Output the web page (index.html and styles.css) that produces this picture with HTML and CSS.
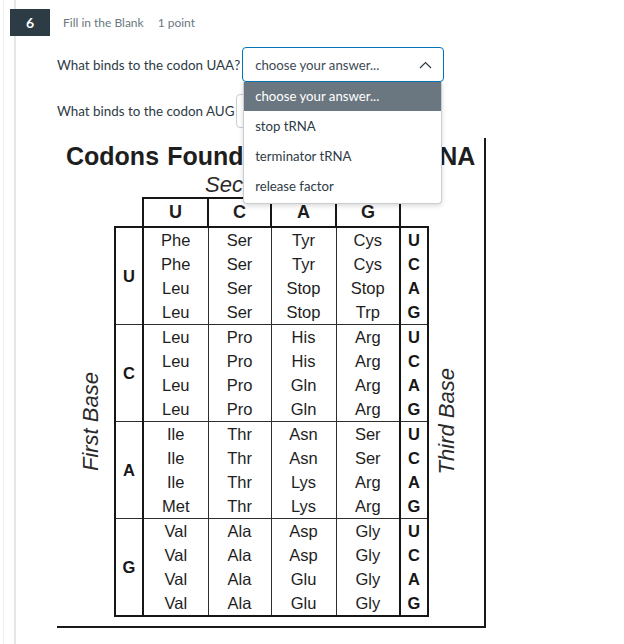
FILE: index.html
```html
<!DOCTYPE html>
<html lang="en">
<head>
<meta charset="utf-8">
<title>Fill in the Blank</title>
<link rel="stylesheet" href="styles.css">
</head>
<body>
<div class="question">
  <div class="q-header">
    <div class="q-num">6</div>
    <span class="q-type">Fill in the Blank</span>
    <span class="q-points">1 point</span>
  </div>
  <div class="q-body">
    <div class="blank-row row1">
      <span class="prompt">What binds to the codon UAA?</span>
      <div class="select-wrap">
        <div class="select open">
          <span>choose your answer...</span>
          <svg class="chev" width="13" height="8" viewBox="0 0 13 8"><polyline points="1,7 6.5,1.5 12,7" fill="none" stroke="#2d3b45" stroke-width="1.2"/></svg>
        </div>
        <ul class="dropdown">
          <li class="active">choose your answer...</li>
          <li>stop tRNA</li>
          <li>terminator tRNA</li>
          <li>release factor</li>
        </ul>
      </div>
    </div>
    <div class="blank-row row2">
      <span class="prompt">What binds to the codon AUG</span>
      <div class="select-wrap">
        <div class="select small">
          <span>choose your answer...</span>
          <svg class="chev" width="13" height="8" viewBox="0 0 13 8"><polyline points="1,1 6.5,6.5 12,1" fill="none" stroke="#2d3b45" stroke-width="1.2"/></svg>
        </div>
      </div>
    </div>
    <div class="figure">
      <div class="fig-title">Codons Found in Messenger RNA</div>
      <div class="fig-sub">Second Base</div>
      <div class="fig-grid">
        <div class="side-label left"><span>First Base</span></div>
        <table class="codon-table">
          <colgroup>
            <col class="c-base"><col class="c-u"><col class="c-c"><col class="c-a"><col class="c-g"><col class="c-base">
          </colgroup>
          <thead>
            <tr><th class="blank"></th><th>U</th><th>C</th><th>A</th><th>G</th><th class="blank"></th></tr>
          </thead>
          <tbody>
            <tr>
              <td class="fb">U</td>
              <td class="aa"><div>Phe</div><div>Phe</div><div>Leu</div><div>Leu</div></td>
              <td class="aa"><div>Ser</div><div>Ser</div><div>Ser</div><div>Ser</div></td>
              <td class="aa"><div>Tyr</div><div>Tyr</div><div>Stop</div><div>Stop</div></td>
              <td class="aa"><div>Cys</div><div>Cys</div><div>Stop</div><div>Trp</div></td>
              <td class="tb"><div>U</div><div>C</div><div>A</div><div>G</div></td>
            </tr>
            <tr>
              <td class="fb">C</td>
              <td class="aa"><div>Leu</div><div>Leu</div><div>Leu</div><div>Leu</div></td>
              <td class="aa"><div>Pro</div><div>Pro</div><div>Pro</div><div>Pro</div></td>
              <td class="aa"><div>His</div><div>His</div><div>Gln</div><div>Gln</div></td>
              <td class="aa"><div>Arg</div><div>Arg</div><div>Arg</div><div>Arg</div></td>
              <td class="tb"><div>U</div><div>C</div><div>A</div><div>G</div></td>
            </tr>
            <tr>
              <td class="fb">A</td>
              <td class="aa"><div>Ile</div><div>Ile</div><div>Ile</div><div>Met</div></td>
              <td class="aa"><div>Thr</div><div>Thr</div><div>Thr</div><div>Thr</div></td>
              <td class="aa"><div>Asn</div><div>Asn</div><div>Lys</div><div>Lys</div></td>
              <td class="aa"><div>Ser</div><div>Ser</div><div>Arg</div><div>Arg</div></td>
              <td class="tb"><div>U</div><div>C</div><div>A</div><div>G</div></td>
            </tr>
            <tr>
              <td class="fb">G</td>
              <td class="aa"><div>Val</div><div>Val</div><div>Val</div><div>Val</div></td>
              <td class="aa"><div>Ala</div><div>Ala</div><div>Ala</div><div>Ala</div></td>
              <td class="aa"><div>Asp</div><div>Asp</div><div>Glu</div><div>Glu</div></td>
              <td class="aa"><div>Gly</div><div>Gly</div><div>Gly</div><div>Gly</div></td>
              <td class="tb"><div>U</div><div>C</div><div>A</div><div>G</div></td>
            </tr>
          </tbody>
        </table>
        <div class="side-label right"><span>Third Base</span></div>
      </div>
    </div>
  </div>
</div>
</body>
</html>
```

FILE: styles.css
```css
* { box-sizing: border-box; }

html, body {
  margin: 0;
  padding: 0;
}

body {
  width: 624px;
  height: 644px;
  overflow: hidden;
  background: #fff linear-gradient(to right,
    transparent 3px, #f0f0f0 3px, #f0f0f0 4px, transparent 4px,
    transparent 14px, #e6e6e6 14px, #e6e6e6 16px, transparent 16px);
  font-family: Lato, "Noto Sans", sans-serif;
  color: #2d3b45;
}

.q-header {
  display: flex;
  align-items: center;
  padding-top: 9px;
}

.q-num {
  margin-left: 10px;
  width: 40px;
  height: 27px;
  background: #2d3b45;
  color: #fff;
  font-size: 14px;
  font-weight: 700;
  display: flex;
  align-items: center;
  justify-content: center;
}

.q-type,
.q-points {
  font-size: 12px;
  color: #6b7780;
}

.q-type { margin-left: 13px; }
.q-points { margin-left: 14px; }

.q-body {
  padding-left: 57px;
}

.blank-row {
  display: flex;
  align-items: center;
  gap: 2px;
  font-size: 13.4px;
}

.row1 { margin-top: 11px; height: 35px; }
.row2 { margin-top: 12px; height: 34px; }

.select-wrap {
  position: relative;
}

.select {
  width: 202px;
  height: 35px;
  border: 1px solid #c7cdd1;
  border-radius: 4px;
  background: #fff;
  display: flex;
  align-items: center;
  justify-content: space-between;
  padding: 0 11px 0 12px;
  font-size: 13.2px;
  color: #3d4a54;
}

.select.small { height: 34px; }

.select.open {
  border-color: #0374b5;
}

.chev { display: block; }

.dropdown {
  position: absolute;
  top: 100%;
  left: 1px;
  width: 199px;
  margin: 0;
  padding: 0 0 2px;
  list-style: none;
  background: #fff;
  border: 1px solid #c7cdd1;
  border-top: none;
  border-radius: 0 0 4px 4px;
  box-shadow: 0 2px 5px rgba(0, 0, 0, 0.15);
  z-index: 10;
  font-size: 13.2px;
  color: #2d3b45;
}

.dropdown li {
  height: 30px;
  line-height: 30px;
  padding-left: 11px;
}

.dropdown li.active {
  height: 29px;
  line-height: 29px;
  background: #6b7780;
  color: #fff;
}

.figure {
  margin-top: 10px;
  width: 429px;
  height: 490px;
  border-right: 2px solid #1a1a1a;
  border-bottom: 2px solid #1a1a1a;
  padding-top: 4px;
  font-family: "Liberation Sans", Arial, sans-serif;
  color: #1e1e1e;
  overflow: hidden;
}

.fig-title {
  font-size: 25px;
  font-weight: 700;
  line-height: 28px;
  padding-left: 9px;
  word-spacing: 1.3px;
  white-space: nowrap;
}

.fig-sub {
  margin-left: 85px;
  margin-top: 3px;
  width: 257px;
  text-align: center;
  font-style: italic;
  font-size: 22px;
  line-height: 24px;
  color: #2a2a2a;
}

.fig-grid {
  display: flex;
}

.side-label {
  display: flex;
  align-items: center;
  padding-top: 29px;
}

.side-label span {
  writing-mode: vertical-rl;
  transform: rotate(180deg);
  font-style: italic;
  font-size: 22px;
  line-height: 24px;
  color: #2a2a2a;
  white-space: nowrap;
}

.side-label.left {
  width: 57px;
  justify-content: flex-end;
  padding-right: 11px;
}

.side-label.right {
  padding-left: 6px;
}

.codon-table {
  border-collapse: collapse;
  table-layout: fixed;
  width: 313px;
}

.c-base { width: 28px; }
.c-u { width: 65px; }
.c-c { width: 63px; }
.c-a { width: 65px; }
.c-g { width: 64px; }

.codon-table th {
  height: 29px;
  padding: 0;
  font-size: 18px;
  font-weight: 700;
  text-align: center;
  border: 2px solid #161616;
}

.codon-table th.blank {
  border: none;
}

.codon-table td {
  padding: 0;
  text-align: center;
  vertical-align: middle;
  border: 1px solid #2e2e2e;
  font-size: 16.5px;
}

.codon-table td.fb,
.codon-table td.tb {
  border-left: 2px solid #161616;
  border-right: 2px solid #161616;
  font-weight: 700;
  color: #161616;
}

.codon-table tbody tr:first-child td {
  border-top: 2px solid #161616;
}

.codon-table tbody tr:last-child td {
  border-bottom: 2px solid #161616;
}

.codon-table td div {
  line-height: 24px;
}
```
